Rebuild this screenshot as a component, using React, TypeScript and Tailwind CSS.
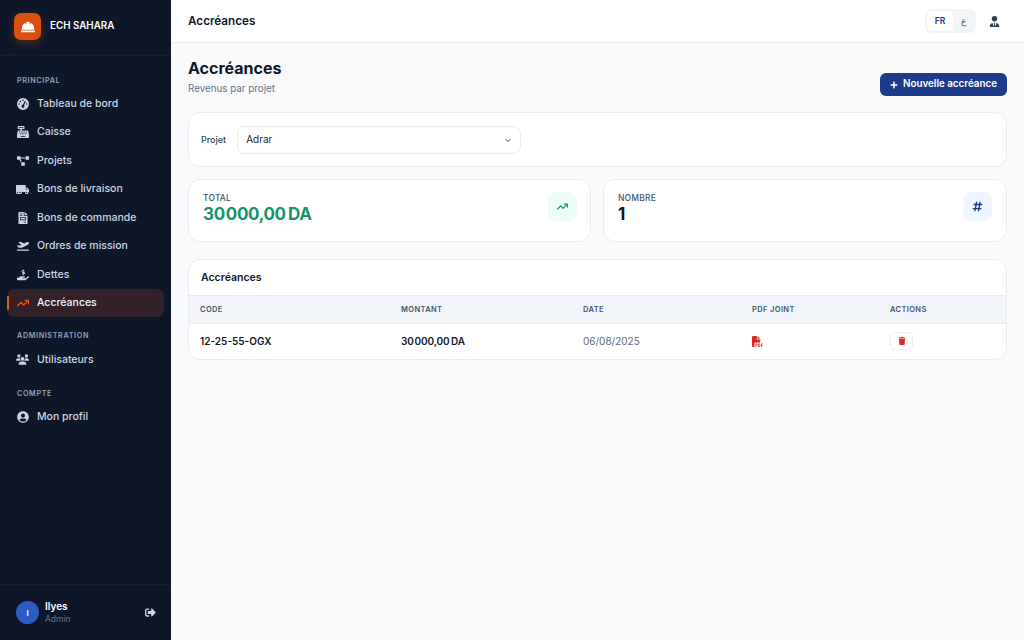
import type {ReactNode} from "react";
import {
  FaCashRegister,
  FaFileInvoice,
  FaHandHoldingUsd,
  FaHardHat,
  FaHashtag,
  FaPlaneDeparture,
  FaPlus,
  FaProjectDiagram,
  FaSignOutAlt,
  FaTrash,
  FaTruckMoving,
  FaUserCircle,
} from "react-icons/fa";
import {
  FaArrowTrendUp,
  FaChevronDown,
  FaFilePdf,
  FaGaugeHigh,
  FaUsers,
  FaUserTie,
} from "react-icons/fa6";

const principal = [
  {label: "Tableau de bord", icon: <FaGaugeHigh />},
  {label: "Caisse", icon: <FaCashRegister />},
  {label: "Projets", icon: <FaProjectDiagram />},
  {label: "Bons de livraison", icon: <FaTruckMoving className="text-[13px]" />},
  {label: "Bons de commande", icon: <FaFileInvoice />},
  {label: "Ordres de mission", icon: <FaPlaneDeparture />},
  {label: "Dettes", icon: <FaHandHoldingUsd />},
  {label: "Accréances", icon: <FaArrowTrendUp />, active: true},
];

function SectionLabel({children}: {children: ReactNode}) {
  return (
    <div className="h-[12px] pl-[17px] text-[7.2px] leading-[12px] font-semibold tracking-[0.09em] text-[#94a3b8]">
      {children}
    </div>
  );
}

function NavItem({
  label,
  icon,
  active = false,
}: {
  label: string;
  icon: ReactNode;
  active?: boolean;
}) {
  return (
    <div
      className={`relative mx-[7px] flex h-[28px] items-center gap-[8px] rounded-[7px] pl-[9px] text-[10.5px] font-medium ${
        active ? "bg-[#33212a] text-[#f1f5f9]" : "text-[#cbd5e1]"
      }`}
    >
      {active && (
        <div className="absolute top-[7px] left-0 h-[14px] w-[2px] rounded-full bg-[#ea580c]" />
      )}
      <span
        className={`flex w-[13px] justify-center text-[12px] ${
          active ? "text-[#ea580c]" : "text-[#cbd5e1]"
        }`}
      >
        {icon}
      </span>
      {label}
    </div>
  );
}

function Sidebar() {
  return (
    <aside className="flex h-full w-[171px] shrink-0 flex-col bg-[#0d1729]">
      <div className="flex h-[56px] shrink-0 items-center gap-[9px] border-b border-[#131e32] pb-[2px] pl-[14px]">
        <div className="flex h-[27px] w-[27px] items-center justify-center rounded-[7px] bg-[#d9500f] text-[14px] text-white shadow-[0_3px_10px_rgba(234,88,12,0.3)]">
          <FaHardHat />
        </div>
        <span className="text-[9.8px] font-semibold text-white">ECH SAHARA</span>
      </div>

      <div className="flex-1 pt-[19px]">
        <SectionLabel>PRINCIPAL</SectionLabel>
        <div className="mt-[2.6px] flex flex-col gap-[0.5px]">
          {principal.map((item) => (
            <NavItem key={item.label} {...item} />
          ))}
        </div>
        <div className="mt-[13.4px]">
          <SectionLabel>ADMINISTRATION</SectionLabel>
        </div>
        <div className="mt-[3.5px]">
          <NavItem label="Utilisateurs" icon={<FaUsers className="text-[13px]" />} />
        </div>
        <div className="mt-[14px]">
          <SectionLabel>COMPTE</SectionLabel>
        </div>
        <div className="mt-[3px]">
          <NavItem label="Mon profil" icon={<FaUserCircle />} />
        </div>
      </div>

      <div className="flex h-[56px] shrink-0 items-center border-t border-[#131e32] pr-[15px] pl-[16px]">
        <div className="flex h-[23px] w-[23px] items-center justify-center rounded-full bg-[#2b5cc4] text-[8px] font-semibold text-white">
          I
        </div>
        <div className="ml-[6px] flex-1">
          <div className="text-[10px] leading-[13px] font-semibold text-white">Ilyes</div>
          <div className="text-[8.5px] leading-[13px] text-[#64748b]">Admin</div>
        </div>
        <FaSignOutAlt className="text-[11px] text-[#cbd5e1]" />
      </div>
    </aside>
  );
}

function StatCard({
  label,
  value,
  valueClass,
  iconClass,
  icon,
}: {
  label: string;
  value: string;
  valueClass: string;
  iconClass: string;
  icon: ReactNode;
}) {
  return (
    <div className="flex h-[63px] items-start justify-between rounded-[12px] border border-[#e8ecf2] bg-white px-[14px] pt-[12px]">
      <div>
        <div className="text-[8.5px] leading-[12px] font-medium tracking-[0.02em] text-[#475569]">
          {label}
        </div>
        <div className={`mt-[1px] text-[17px] leading-[18px] font-bold tracking-[-0.02em] ${valueClass}`}>
          {value}
        </div>
      </div>
      <div
        className={`flex h-[29px] w-[29px] items-center justify-center rounded-[8px] text-[11px] ${iconClass}`}
      >
        {icon}
      </div>
    </div>
  );
}

function AccrualsTable() {
  return (
    <div className="mt-[17px] overflow-hidden rounded-[12px] border border-[#e8ecf2] bg-white">
      <div className="flex h-[35px] items-center pt-[1px] pl-[12px] text-[10.5px] font-semibold text-[#0f172a]">
        Accréances
      </div>
      <table className="w-full table-fixed border-collapse text-left">
        <thead>
          <tr className="h-[28px] border-y border-[#e8ecf2] bg-[#f1f5f9] text-[7.5px] font-semibold tracking-[0.05em] text-[#475569]">
            <th className="w-[201px] pl-[11px] font-semibold">CODE</th>
            <th className="w-[182px] pl-[11px] font-semibold">MONTANT</th>
            <th className="w-[169px] pl-[11px] font-semibold">DATE</th>
            <th className="w-[138px] pl-[11px] font-semibold">PDF JOINT</th>
            <th className="pl-[11px] font-semibold">ACTIONS</th>
          </tr>
        </thead>
        <tbody>
          <tr className="h-[35px] text-[10px]">
            <td className="pl-[11px] font-semibold text-[#0f172a]">12-25-55-OGX</td>
            <td className="pl-[11px] font-semibold tracking-[-0.01em] text-[#0f172a]">
              30{"\u200a"}000,00{"\u202f"}DA
            </td>
            <td className="pl-[11px] text-[#5f6b7c]">06/08/2025</td>
            <td className="pl-[11px]">
              <FaFilePdf className="text-[11px] text-[#dc2626]" />
            </td>
            <td className="pl-[11px]">
              <div className="flex h-[18px] w-[23px] items-center justify-center rounded-[5px] border border-[#e8ecf2] bg-white">
                <FaTrash className="text-[8px] text-[#dc2626]" />
              </div>
            </td>
          </tr>
        </tbody>
      </table>
    </div>
  );
}

export default function App() {
  return (
    <div className="flex h-[640px] w-[1024px] overflow-hidden bg-[#f8fafc] font-['Inter',sans-serif]">
      <Sidebar />
      <div className="flex min-w-0 flex-1 flex-col">
        <header className="flex h-[43px] shrink-0 items-center justify-between border-b border-[#e8ecf2] bg-white pr-[24px] pl-[17px]">
          <span className="pt-[1px] text-[11.7px] font-semibold text-[#0f172a]">Accréances</span>
          <div className="flex items-center gap-[13px]">
            <div className="flex h-[24px] w-[51px] items-center rounded-[6px] bg-[#f1f5f9] p-[2px]">
              <div className="flex h-[20px] w-[26px] items-center justify-center rounded-[5px] bg-white text-[8.5px] font-semibold text-[#1e3a8a]">
                FR
              </div>
              <div className="flex flex-1 justify-center text-[9px] text-[#475569]">ع</div>
            </div>
            <FaUserTie className="text-[11px] text-[#334155]" />
          </div>
        </header>

        <main className="flex-1 px-[17px] pt-[15px]">
          <div className="flex h-[54px] items-start justify-between">
            <div>
              <h1 className="text-[16px] leading-[21px] font-bold text-[#0f172a]">Accréances</h1>
              <p className="mt-[3px] text-[9.8px] leading-[14px] text-[#64748b]">Revenus par projet</p>
            </div>
            <button className="mt-[15px] flex h-[23px] w-[127px] items-center justify-center gap-[5px] rounded-[6px] bg-[#1e3a8a] text-[9.8px] font-semibold text-white">
              <FaPlus className="text-[8px]" />
              Nouvelle accréance
            </button>
          </div>

          <div className="flex h-[55px] items-center gap-[11px] rounded-[12px] border border-[#e8ecf2] bg-white pl-[12px]">
            <span className="text-[9px] font-medium text-[#334155]">Projet</span>
            <div className="flex h-[28px] w-[284px] items-center justify-between rounded-[7px] border border-[#e8ecf2] bg-white pr-[9px] pl-[8px] text-[10px] text-[#1e293b]">
              Adrar
              <FaChevronDown className="text-[6px] text-[#475569]" />
            </div>
          </div>

          <div className="mt-[12px] grid grid-cols-[403px_1fr] gap-[12px]">
            <StatCard
              label="TOTAL"
              value={"30\u200a000,00\u202fDA"}
              valueClass="text-[#16956a]"
              iconClass="-mr-[1px] bg-[#ecfdf5] text-[#16956a]"
              icon={<FaArrowTrendUp />}
            />
            <StatCard
              label="NOMBRE"
              value="1"
              valueClass="text-[#0f172a]"
              iconClass="bg-[#eff6ff] text-[#1e3a8a]"
              icon={<FaHashtag />}
            />
          </div>

          <AccrualsTable />
        </main>
      </div>
    </div>
  );
}
